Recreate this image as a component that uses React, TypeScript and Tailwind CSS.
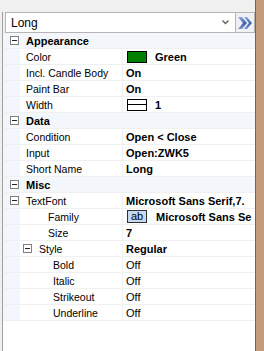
import React from 'react'

const font = { fontFamily: '"Liberation Sans", Arial, sans-serif' }

function Expander() {
  return (
    <span className="flex h-[9px] w-[9px] items-center justify-center border border-[#808080] bg-white">
      <span className="h-px w-[5px] bg-[#202020]" />
    </span>
  )
}

function Category({ label }: { label: string }) {
  return (
    <div className="flex h-[16px] items-center border-b border-[#f0f0f0] bg-[#f3f6fb]">
      <div className="ml-[7px] w-[16px]">
        <Expander />
      </div>
      <span className="font-bold text-black">{label}</span>
    </div>
  )
}

interface RowProps {
  label: string
  pad?: number
  expand?: boolean
  bold?: boolean
  children?: React.ReactNode
}

const padClass: Record<number, string> = {
  6: 'pl-[6px]',
  28: 'pl-[28px]',
  3: 'pl-[3px]',
  33: 'pl-[33px]',
}

function Row({ label, pad = 6, expand, bold = true, children }: RowProps) {
  return (
    <div className="flex h-[16px] border-b border-[#f0f0f0]">
      <div className="flex w-[17px] items-center bg-[#f3f6fb] pl-[7px]">
        {expand && pad === 6 && <Expander />}
      </div>
      <div className={`flex w-[102px] items-center whitespace-nowrap text-[10.5px] text-[#000] ${padClass[pad]}`}>
        {expand && pad !== 6 && (
          <span className="mr-[7px]">
            <Expander />
          </span>
        )}
        {label}
      </div>
      <div
        className={`flex flex-1 items-center overflow-hidden whitespace-nowrap border-l border-[#f0f0f0] pl-[3px] text-black ${
          bold ? 'font-bold' : ''
        }`}
      >
        {children}
      </div>
    </div>
  )
}

export default function App() {
  return (
    <div className="flex h-[351px] w-[264px] bg-[#f0f0f0] text-[11px] leading-[16px]" style={font}>
      <div className="flex w-[255px] flex-col">
        <div className="h-[12px]" />
        <div className="ml-[2px] flex flex-1 flex-col border-l border-[#a0a0a0]">
          <div className="flex h-[21px]">
            <div className="ml-[2px] flex w-[231px] items-center border border-[#b4b4b4] bg-white pl-[5px] pr-[6px] text-[12px]">
              <span className="flex-1 text-black">Long</span>
              <svg width="7" height="5" viewBox="0 0 7 5">
                <path d="M0.5 0.5 L3.5 3.5 L6.5 0.5" fill="none" stroke="#606060" strokeWidth="1.4" />
              </svg>
            </div>
            <div className="flex w-[19px] items-center justify-center border border-l-0 border-[#b4b4b4] bg-[#eef0f4]">
              <svg width="16" height="14" viewBox="0 0 16 14">
                <defs>
                  <linearGradient id="g" x1="0" y1="0" x2="0" y2="1">
                    <stop offset="0" stopColor="#8fa8dc" />
                    <stop offset="0.5" stopColor="#3f5fae" />
                    <stop offset="1" stopColor="#7d95cc" />
                  </linearGradient>
                </defs>
                <path d="M1 1 L5 1 L10 7 L5 13 L1 13 L6 7 Z" fill="url(#g)" />
                <path d="M7 1 L10 1 L15 7 L10 13 L7 13 L12 7 Z" fill="url(#g)" />
              </svg>
            </div>
          </div>
          <div className="flex flex-1 flex-col bg-white">
            <Category label="Appearance" />
            <Row label="Color">
              <span className="ml-[1px] h-[12px] w-[20px] border border-black bg-[#008000]" />
              <span className="ml-[8px]">Green</span>
            </Row>
            <Row label="Incl. Candle Body">On</Row>
            <Row label="Paint Bar">On</Row>
            <Row label="Width">
              <span className="ml-[1px] flex h-[12px] w-[20px] items-center border border-black bg-white">
                <span className="h-px w-full bg-black" />
              </span>
              <span className="ml-[8px]">1</span>
            </Row>
            <Category label="Data" />
            <Row label="Condition">Open &lt; Close</Row>
            <Row label="Input">Open:ZWK5</Row>
            <Row label="Short Name">Long</Row>
            <Category label="Misc" />
            <Row label="TextFont" expand>
              Microsoft Sans Serif,7.
            </Row>
            <Row label="Family" pad={28}>
              <span className="ml-[1px] flex h-[13px] w-[20px] items-center justify-center border border-[#303030] bg-[#c5d9f1] font-normal leading-none">
                ab
              </span>
              <span className="ml-[9px]">Microsoft Sans Se</span>
            </Row>
            <Row label="Size" pad={28}>7</Row>
            <Row label="Style" pad={3} expand>
              Regular
            </Row>
            <Row label="Bold" pad={33} bold={false}>Off</Row>
            <Row label="Italic" pad={33} bold={false}>Off</Row>
            <Row label="Strikeout" pad={33} bold={false}>Off</Row>
            <Row label="Underline" pad={33} bold={false}>Off</Row>
          </div>
        </div>
      </div>
      <div className="w-[9px] border-l border-[#7a6450] bg-[#c49c7a]" />
    </div>
  )
}
